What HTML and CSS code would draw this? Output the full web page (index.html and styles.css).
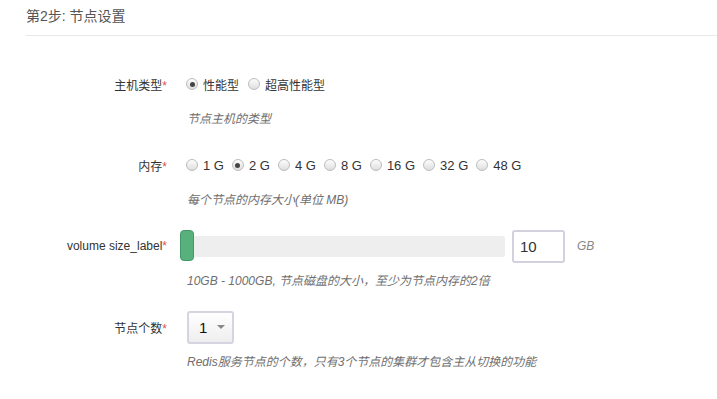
FILE: index.html
```html
<!DOCTYPE html>
<html lang="zh-CN">
<head>
  <meta charset="UTF-8" />
  <title>节点设置</title>
  <link rel="stylesheet" href="styles.css">
</head>
<body>
  <div class="step">
    <h3 class="step-title">第2步: 节点设置</h3>

    <form class="node-form">
      <div class="group">
        <div class="field">
          <label class="field-label">主机类型<span class="req">*</span></label>
          <div class="field-control">
            <label class="radio"><input type="radio" name="type" checked>性能型</label>
            <label class="radio"><input type="radio" name="type">超高性能型</label>
          </div>
        </div>
        <p class="hint">节点主机的类型</p>
      </div>

      <div class="group">
        <div class="field">
          <label class="field-label">内存<span class="req">*</span></label>
          <div class="field-control mem-options">
            <label class="radio"><input type="radio" name="mem">1 G</label>
            <label class="radio"><input type="radio" name="mem" checked>2 G</label>
            <label class="radio"><input type="radio" name="mem">4 G</label>
            <label class="radio"><input type="radio" name="mem">8 G</label>
            <label class="radio"><input type="radio" name="mem">16 G</label>
            <label class="radio"><input type="radio" name="mem">32 G</label>
            <label class="radio"><input type="radio" name="mem">48 G</label>
          </div>
        </div>
        <p class="hint">每个节点的内存大小(单位 MB)</p>
      </div>

      <div class="group">
        <div class="field">
          <label class="field-label">volume size_label<span class="req">*</span></label>
          <div class="field-control">
            <div class="slider">
              <span class="slider-handle"></span>
            </div>
            <input class="size-input" type="text" value="10">
            <span class="unit">GB</span>
          </div>
        </div>
        <p class="hint">10GB - 1000GB, 节点磁盘的大小，至少为节点内存的2倍</p>
      </div>

      <div class="group">
        <div class="field">
          <label class="field-label">节点个数<span class="req">*</span></label>
          <div class="field-control">
            <div class="select">
              <span class="select-value">1</span>
              <span class="caret"></span>
            </div>
          </div>
        </div>
        <p class="hint">Redis服务节点的个数，只有3个节点的集群才包含主从切换的功能</p>
      </div>
    </form>
  </div>
</body>
</html>
```

FILE: styles.css
```css
body {
  margin: 0;
  background: #fff;
  color: #333;
  font-family: "Liberation Sans", Arial, "Noto Sans CJK SC", sans-serif;
  font-size: 12px;
}
.step {
  padding-left: 26px;
}
.step-title {
  margin: 0;
  padding: 7px 0 10px 0;
  font-size: 14px;
  font-weight: normal;
  line-height: 18px;
  color: #555;
  border-bottom: 1px solid #e8e8e8;
}
.node-form {
  padding-top: 31px;
}
.group {
  margin-bottom: 20px;
}
.field {
  display: grid;
  grid-template-columns: 141px 1fr;
  column-gap: 20px;
  align-items: center;
  height: 34px;
}
.field-label {
  text-align: right;
  color: #333;
}
.req {
  color: #d9534f;
}
.field-control {
  display: flex;
  align-items: center;
}
.radio {
  display: flex;
  align-items: center;
  margin-right: 10px;
  cursor: pointer;
}
.mem-options {
  font-size: 13px;
}
.mem-options .radio {
  margin-right: 9px;
}
.radio input {
  appearance: none;
  -webkit-appearance: none;
  width: 12px;
  height: 12px;
  margin: 0 5px 0 -1px;
  border: 1px solid #bdbdbd;
  border-radius: 50%;
  background: linear-gradient(#fdfdfd, #dedede);
  position: relative;
}
.radio input:checked::after {
  content: "";
  position: absolute;
  left: 2.5px;
  top: 2.5px;
  width: 5px;
  height: 5px;
  border-radius: 50%;
  background: #444;
}
.hint {
  margin: 9px 0 0 161px;
  line-height: 18px;
  font-size: 12px;
  font-style: italic;
  color: #6f6f6f;
}
.slider {
  position: relative;
  width: 318px;
  height: 21px;
  background: #eee;
  border-radius: 2px;
}
.slider-handle {
  position: absolute;
  left: -7px;
  top: -6px;
  width: 12px;
  height: 29px;
  background: #58b17c;
  border: 1px solid #43996a;
  border-radius: 4px;
}
.size-input {
  width: 53px;
  height: 33px;
  box-sizing: border-box;
  margin-left: 7px;
  padding: 0 6px;
  border: 2px solid #d4d1df;
  border-radius: 3px;
  font-family: inherit;
  font-size: 15px;
  color: #333;
}
.unit {
  margin-left: 12px;
  font-style: italic;
  color: #888;
}
.select {
  display: flex;
  align-items: center;
  width: 47px;
  height: 33px;
  box-sizing: border-box;
  padding-left: 10px;
  border: 2px solid #d6d4e0;
  border-radius: 3px;
  background: linear-gradient(#fff, #eee);
}
.select-value {
  font-size: 15px;
  color: #111;
}
.caret {
  margin-left: 10px;
  width: 0;
  height: 0;
  border-left: 4px solid transparent;
  border-right: 4px solid transparent;
  border-top: 4px solid #888;
}
```
